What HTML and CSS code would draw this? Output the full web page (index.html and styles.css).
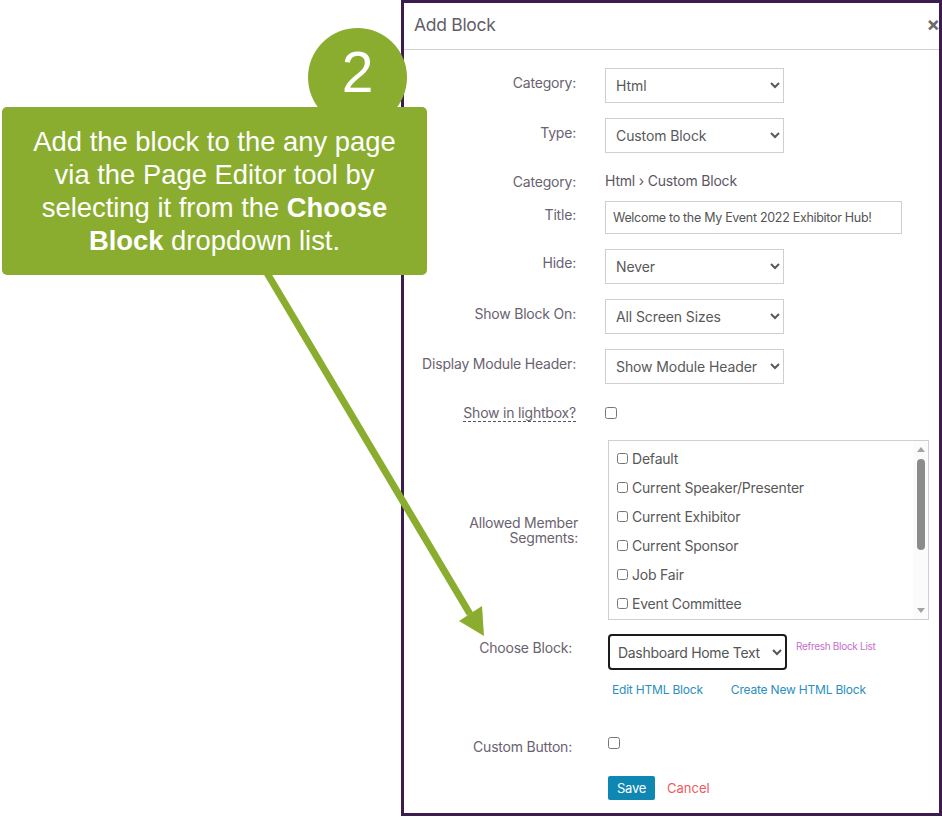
FILE: index.html
```html
<!DOCTYPE html>
<html lang="en">
<head>
    <meta charset="UTF-8">
    <meta name="viewport" content="width=device-width, initial-scale=1.0">
    <title>Add Block</title>

    <link rel="stylesheet" href="styles.css">
</head>
<body>
    <div class="stage">

        <div class="modal">
            <div class="modal-head">
                <h2>Add Block</h2>
                <span class="close">&times;</span>
            </div>

            <form class="modal-body">
                <div class="row row-category">
                    <label>Category:</label>
                    <select class="field"><option>Html</option></select>
                </div>

                <div class="row row-type">
                    <label>Type:</label>
                    <select class="field"><option>Custom Block</option></select>
                </div>

                <div class="row row-path">
                    <label>Category:</label>
                    <span class="path">Html &rsaquo; Custom Block</span>
                </div>

                <div class="row row-title">
                    <label>Title:</label>
                    <input type="text" class="title-input" value="Welcome to the My Event 2022 Exhibitor Hub!">
                </div>

                <div class="row row-hide">
                    <label>Hide:</label>
                    <select class="field"><option>Never</option></select>
                </div>

                <div class="row row-sizes">
                    <label>Show Block On:</label>
                    <select class="field"><option>All Screen Sizes</option></select>
                </div>

                <div class="row row-header">
                    <label>Display Module Header:</label>
                    <select class="field"><option>Show Module Header</option></select>
                </div>

                <div class="row row-lightbox">
                    <label><span class="hint">Show in lightbox?</span></label>
                    <div><input type="checkbox" class="check"></div>
                </div>

                <div class="row row-segments">
                    <label>Allowed Member<br>Segments:</label>
                    <div class="segments">
                        <div class="seg-list">
                            <div class="seg"><input type="checkbox">Default</div>
                            <div class="seg"><input type="checkbox">Current Speaker/Presenter</div>
                            <div class="seg"><input type="checkbox">Current Exhibitor</div>
                            <div class="seg"><input type="checkbox">Current Sponsor</div>
                            <div class="seg"><input type="checkbox">Job Fair</div>
                            <div class="seg"><input type="checkbox">Event Committee</div>
                        </div>
                        <!-- scrollbar -->
                        <div class="seg-scroll">
                            <span class="arrow-up"></span>
                            <div class="track"><div class="thumb"></div></div>
                            <span class="arrow-down"></span>
                        </div>
                    </div>
                </div>

                <div class="row row-choose">
                    <label>Choose Block:</label>
                    <div class="choose">
                        <select class="block-select"><option>Dashboard Home Text</option></select>
                        <a href="#" class="refresh">Refresh Block List</a>
                    </div>
                </div>

                <div class="row row-links">
                    <span></span>
                    <div class="links">
                        <a href="#">Edit HTML Block</a>
                        <a href="#">Create New HTML Block</a>
                    </div>
                </div>

                <div class="row row-custom">
                    <label>Custom Button:</label>
                    <div><input type="checkbox" class="check"></div>
                </div>

                <div class="row row-actions">
                    <span></span>
                    <div class="actions">
                        <button type="button" class="save">Save</button>
                        <a href="#" class="cancel">Cancel</a>
                    </div>
                </div>
            </form>
        </div>

        <!-- step callout -->
        <svg class="pointer" width="942" height="817" viewBox="0 0 942 817">
            <line x1="264" y1="268" x2="470" y2="614" stroke="#8aad2f" stroke-width="7"/>
            <polygon points="484,636 459,621 482,606" fill="#8aad2f"/>
        </svg>
        <div class="step-badge">2</div>
        <div class="callout">
            Add the block to the any page<br>
            via the Page Editor tool by<br>
            selecting it from the <b>Choose</b><br>
            <b>Block</b> dropdown list.
        </div>

    </div>
</body>
</html>
```

FILE: styles.css
```css
body{
    margin: 0;
    background: #fff;
    font-family: Inter, "Noto Sans", sans-serif;
}

.stage{
    position: relative;
    width: 942px;
    height: 817px;
    padding-left: 401px;
    box-sizing: border-box;
    overflow: hidden;
}

/* the dialog */
.modal{
    width: 541px;
    height: 816px;
    box-sizing: border-box;
    border: 3px solid #3d1c4d;
    background: #fff;
    overflow: hidden;
}

.modal-head{
    position: relative;
    height: 46px;
    border-bottom: 1px solid #d2d2d2;
}

.modal-head h2{
    margin: 0;
    padding-left: 10px;
    font-size: 17.5px;
    font-weight: 400;
    line-height: 44px;
    color: #645d69;
    letter-spacing: -0.3px;
}

.close{
    position: absolute;
    right: -1px;
    top: 11px;
    font-size: 20px;
    font-weight: 700;
    color: #6b6b6b;
    line-height: 20px;
}

.modal-body{
    padding-top: 18px;
}

.row{
    display: grid;
    grid-template-columns: 174px 1fr;
    column-gap: 27px;
    align-items: start;
}

.row label{
    text-align: right;
    font-size: 14px;
    line-height: 18px;
    color: #6a6270;
    padding-top: 6px;
    padding-right: 2px;
    letter-spacing: -0.2px;
}

.field{
    width: 179px;
    height: 35px;
    border: 1px solid #cfcfcf;
    border-radius: 0;
    background: #fff;
    font-family: Inter, sans-serif;
    font-size: 14px;
    color: #595959;
    padding: 0 6px;
    letter-spacing: -0.1px;
}

.row-type{ margin-top: 15px; }

.row-path{ margin-top: 19px; }
.row-path label{ padding-top: 1px; }
.path{
    font-size: 14px;
    line-height: 18px;
    color: #5d5663;
    letter-spacing: -0.2px;
}

.row-title{ margin-top: 10px; }
.row-title label{ padding-top: 5px; }
.title-input{
    width: 297px;
    height: 33px;
    box-sizing: border-box;
    border: 1px solid #cfcfcf;
    padding: 0 7px;
    font-family: Inter, sans-serif;
    font-size: 12.5px;
    color: #555;
    letter-spacing: -0.3px;
}

.row-hide{ margin-top: 15px; }
.row-hide label{ padding-top: 5px; }
.row-sizes{ margin-top: 15px; }
.row-header{ margin-top: 15px; }

.row-lightbox{ margin-top: 20px; }
.row-lightbox label{ padding-top: 0; }
.hint{
    border-bottom: 1px dashed #555;
}

.check{
    display: block;
    margin: 3px 0 0 0;
    width: 12px;
    height: 12px;
}

/* member segment list */
.row-segments{
    margin-top: 18px;
    align-items: center;
    column-gap: 30px;
}
.row-segments label{
    line-height: 15px;
    padding-top: 0;
    padding-right: 0;
}

.segments{
    display: flex;
    width: 321px;
    height: 180px;
    box-sizing: border-box;
    border: 1px solid #cfcfcf;
    overflow: hidden;
}

.seg-list{
    flex: 1;
    padding: 3px 0 0 8px;
}

.seg{
    display: flex;
    align-items: center;
    height: 29px;
    font-size: 14px;
    color: #585858;
    letter-spacing: -0.2px;
}

.seg input{
    width: 11px;
    height: 11px;
    margin: 0 4px 0 0;
}

.seg-scroll{
    width: 15px;
    display: flex;
    flex-direction: column;
    align-items: center;
    background: #fbfbfb;
}

.arrow-up,
.arrow-down{
    width: 0;
    height: 0;
    border-left: 4px solid transparent;
    border-right: 4px solid transparent;
}
.arrow-up{
    margin-top: 6px;
    border-bottom: 5px solid #a3a3a3;
}
.arrow-down{
    margin-bottom: 6px;
    border-top: 5px solid #a3a3a3;
}

.track{
    flex: 1;
    padding-top: 7px;
}
.thumb{
    width: 8px;
    height: 91px;
    border-radius: 4px;
    background: #8b8b8b;
}

.row-choose{
    margin-top: 14px;
    column-gap: 30px;
}
.row-choose label{
    padding-top: 5px;
    padding-right: 6px;
}

.choose{
    display: flex;
    align-items: flex-start;
}

.block-select{
    width: 179px;
    height: 36px;
    border: 2px solid #1b1b1b;
    border-radius: 4px;
    background: #fff;
    font-family: Inter, sans-serif;
    font-size: 14px;
    color: #555;
    padding: 0 4px;
    letter-spacing: -0.3px;
}

.refresh{
    margin-left: 9px;
    margin-top: 6px;
    font-size: 10px;
    color: #c46fc9;
    text-decoration: none;
    letter-spacing: -0.3px;
}

.row-links{
    margin-top: 12px;
    column-gap: 34px;
}
.links{
    display: flex;
    gap: 28px;
    line-height: 16px;
}
.links a{
    font-size: 12px;
    color: #2a8fbd;
    text-decoration: none;
    letter-spacing: -0.2px;
}

.row-custom{
    margin-top: 40px;
    column-gap: 30px;
}
.row-custom label{
    padding-top: 0;
    padding-right: 6px;
}
.row-custom .check{
    margin-top: -1px;
}

.row-actions{
    margin-top: 20px;
    column-gap: 30px;
}
.actions{
    display: flex;
    align-items: center;
    gap: 12px;
}
.save{
    width: 47px;
    height: 24px;
    border: none;
    border-radius: 2px;
    background: #0f87b3;
    color: #fff;
    font-family: Inter, sans-serif;
    font-size: 13px;
    padding: 0;
    letter-spacing: -0.3px;
}
.cancel{
    font-size: 13px;
    color: #ef5b5f;
    text-decoration: none;
}

/* callout laid over the dialog */
.pointer{
    position: absolute;
    left: 0;
    top: 0;
}

.step-badge{
    position: absolute;
    left: 308px;
    top: 28px;
    width: 99px;
    height: 99px;
    border-radius: 50%;
    background: #8aad2f;
    color: #fff;
    font-family: "Liberation Sans", Arial, sans-serif;
    font-size: 57px;
    line-height: 88px;
    text-align: center;
}

.callout{
    position: absolute;
    left: 2px;
    top: 107px;
    width: 425px;
    height: 168px;
    box-sizing: border-box;
    padding-top: 18px;
    border-radius: 5px;
    background: #8aad2f;
    color: #fff;
    font-family: "Liberation Sans", Arial, sans-serif;
    font-size: 27.4px;
    line-height: 33px;
    text-align: center;
}
```
